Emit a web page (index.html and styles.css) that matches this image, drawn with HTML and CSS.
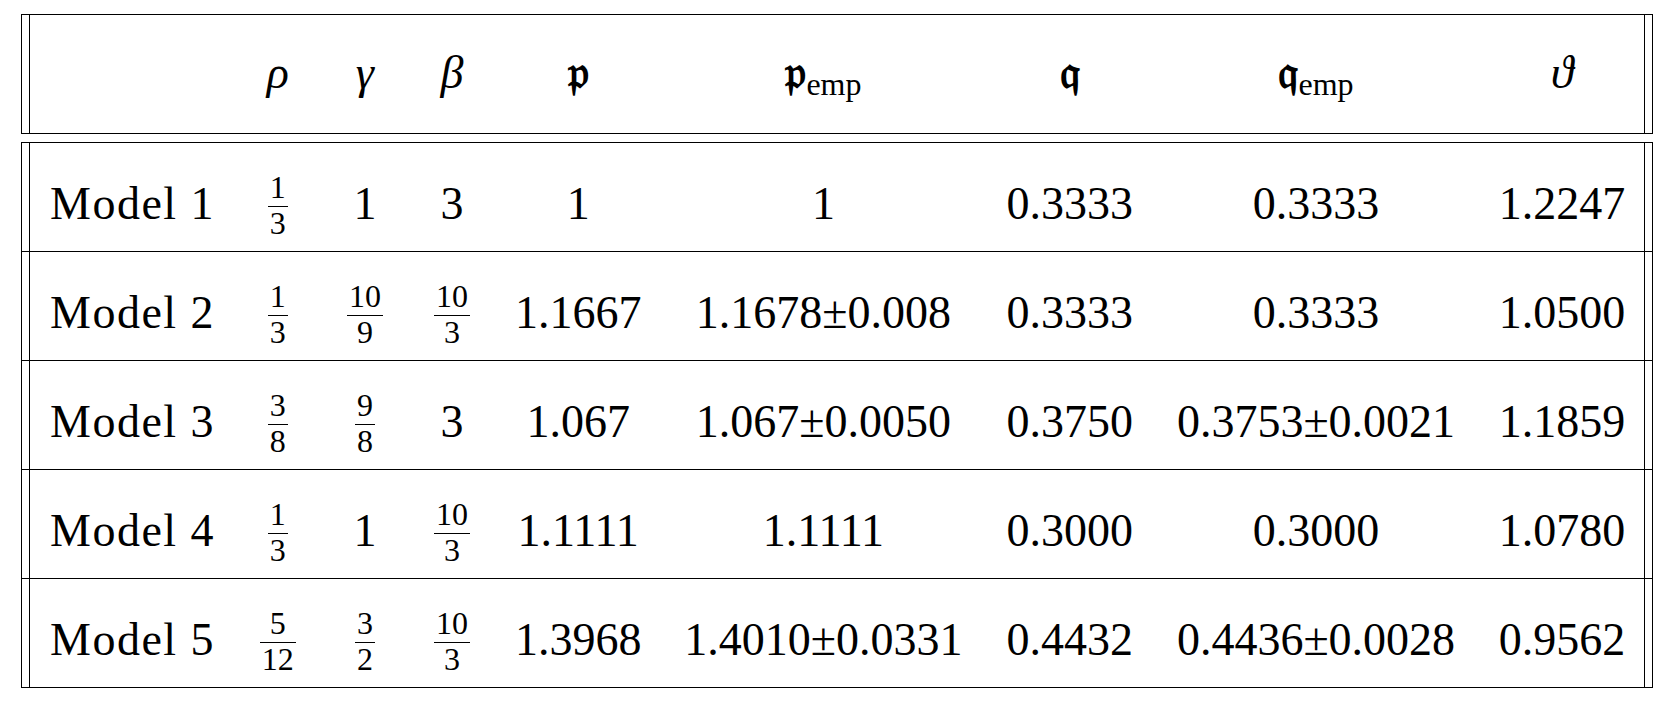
FILE: index.html
```html
<!DOCTYPE html>
<html lang="en">

<head>
  <meta charset="utf-8" />
  <title>Model parameters</title>
  <link rel="stylesheet" href="styles.css">
</head>

<body>
  <table class="tbl head">
    <colgroup>
      <col class="w-edge"><col class="w-label"><col class="w-rho"><col class="w-gamma"><col class="w-beta">
      <col class="w-p"><col class="w-pemp"><col class="w-q"><col class="w-qemp"><col class="w-theta"><col class="w-edge">
    </colgroup>
    <tr>
      <td class="edge"></td>
      <td class="label"></td>
      <td><i>ρ</i></td>
      <td><i>γ</i></td>
      <td><i>β</i></td>
      <td><span class="frak">𝔭</span></td>
      <td><span class="frak">𝔭</span><sub>emp</sub></td>
      <td><span class="frak">𝔮</span></td>
      <td><span class="frak">𝔮</span><sub>emp</sub></td>
      <td><i>ϑ</i></td>
      <td class="edge"></td>
    </tr>
  </table>

  <table class="tbl data">
    <colgroup>
      <col class="w-edge"><col class="w-label"><col class="w-rho"><col class="w-gamma"><col class="w-beta">
      <col class="w-p"><col class="w-pemp"><col class="w-q"><col class="w-qemp"><col class="w-theta"><col class="w-edge">
    </colgroup>
    <tr>
      <td class="edge"></td>
      <td class="label">Model 1</td>
      <td><span class="frac"><span class="num">1</span><span class="den">3</span></span></td>
      <td>1</td>
      <td>3</td>
      <td>1</td>
      <td>1</td>
      <td>0.3333</td>
      <td>0.3333</td>
      <td>1.2247</td>
      <td class="edge"></td>
    </tr>
    <tr>
      <td class="edge"></td>
      <td class="label">Model 2</td>
      <td><span class="frac"><span class="num">1</span><span class="den">3</span></span></td>
      <td><span class="frac"><span class="num">10</span><span class="den">9</span></span></td>
      <td><span class="frac"><span class="num">10</span><span class="den">3</span></span></td>
      <td>1.1667</td>
      <td>1.1678±0.008</td>
      <td>0.3333</td>
      <td>0.3333</td>
      <td>1.0500</td>
      <td class="edge"></td>
    </tr>
    <tr>
      <td class="edge"></td>
      <td class="label">Model 3</td>
      <td><span class="frac"><span class="num">3</span><span class="den">8</span></span></td>
      <td><span class="frac"><span class="num">9</span><span class="den">8</span></span></td>
      <td>3</td>
      <td>1.067</td>
      <td>1.067±0.0050</td>
      <td>0.3750</td>
      <td>0.3753±0.0021</td>
      <td>1.1859</td>
      <td class="edge"></td>
    </tr>
    <tr>
      <td class="edge"></td>
      <td class="label">Model 4</td>
      <td><span class="frac"><span class="num">1</span><span class="den">3</span></span></td>
      <td>1</td>
      <td><span class="frac"><span class="num">10</span><span class="den">3</span></span></td>
      <td>1.1111</td>
      <td>1.1111</td>
      <td>0.3000</td>
      <td>0.3000</td>
      <td>1.0780</td>
      <td class="edge"></td>
    </tr>
    <tr>
      <td class="edge"></td>
      <td class="label">Model 5</td>
      <td><span class="frac"><span class="num">5</span><span class="den">12</span></span></td>
      <td><span class="frac"><span class="num">3</span><span class="den">2</span></span></td>
      <td><span class="frac"><span class="num">10</span><span class="den">3</span></span></td>
      <td>1.3968</td>
      <td>1.4010±0.0331</td>
      <td>0.4432</td>
      <td>0.4436±0.0028</td>
      <td>0.9562</td>
      <td class="edge"></td>
    </tr>
  </table>
</body>

</html>
```

FILE: styles.css
```css
body {
  background-color: #fff;
  color: #000;
  margin: 0;
  padding: 14px 0 0 21px;
  font-family: 'Liberation Serif', 'DejaVu Serif', serif;
  font-size: 46px;
}

.tbl {
  border-collapse: collapse;
  table-layout: fixed;
  width: 1632px;
  border: 1px solid #000;
}

.tbl td {
  padding: 26px 0 12px;
  line-height: 70px;
  text-align: center;
  vertical-align: top;
  white-space: nowrap;
}

.tbl td.edge {
  padding: 0;
}

.tbl td.edge:first-child {
  border-right: 1px solid #000;
}

.tbl td.edge:last-child {
  border-left: 1px solid #000;
}

.tbl td.label {
  text-align: left;
  padding-left: 20px;
  letter-spacing: 1.5px;
}

.head td {
  padding-top: 23px;
  padding-bottom: 25px;
}

.data {
  margin-top: 8px;
}

.data tr + tr td {
  border-top: 1px solid #000;
}

col.w-edge { width: 8px; }
col.w-label { width: 203px; }
col.w-rho { width: 90px; }
col.w-gamma { width: 84px; }
col.w-beta { width: 90px; }
col.w-p { width: 162px; }
col.w-pemp { width: 328px; }
col.w-q { width: 164px; }
col.w-qemp { width: 328px; }
col.w-theta { width: 164px; }

.frak {
  font-weight: bold;
}

sub {
  font-size: 32px;
  vertical-align: -7px;
  line-height: 0;
}

.frac {
  display: inline-flex;
  flex-direction: column;
  vertical-align: 21px;
  font-size: 32px;
  line-height: 26px;
}

.frac .num {
  padding: 0 2px 6px;
  border-bottom: 1px solid #000;
  text-align: center;
}

.frac .den {
  padding: 3px 2px 0;
  text-align: center;
}
```
